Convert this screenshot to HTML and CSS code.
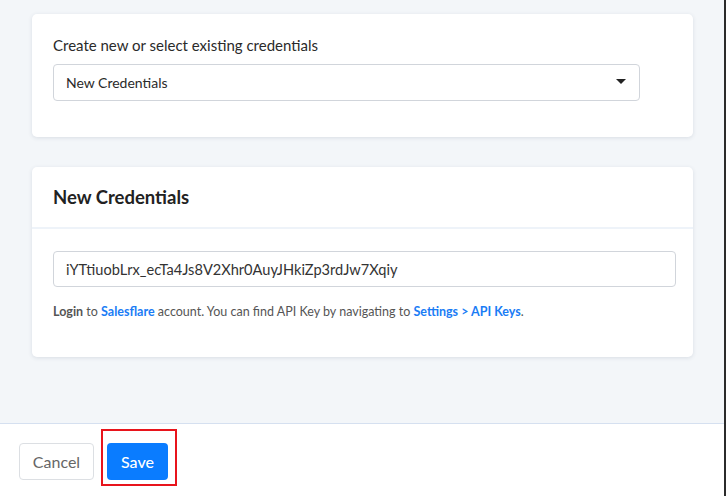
FILE: index.html
```html
<!DOCTYPE html>
<html>
<head>
<meta charset="utf-8">
<link rel="stylesheet" href="styles.css">
</head>
<body>
<div class="frame">
  <main class="content">
    <section class="card card-select">
      <label class="field-label">Create new or select existing credentials</label>
      <div class="select">
        <span class="select-value">New Credentials</span>
        <span class="caret"></span>
      </div>
    </section>
    <section class="card card-creds">
      <header class="card-header">New Credentials</header>
      <div class="card-body">
        <div class="input">iYTtiuobLrx_ecTa4Js8V2Xhr0AuyJHkiZp3rdJw7Xqiy</div>
        <p class="help"><b>Login</b> to <a class="link">Salesflare</a> account. You can find API Key by navigating to <a class="link">Settings &gt; API Keys</a>.</p>
      </div>
    </section>
  </main>
  <footer class="footer">
    <button class="btn btn-cancel">Cancel</button>
    <span class="highlight"><button class="btn btn-save">Save</button></span>
  </footer>
</div>
</body>
</html>
```
FILE: styles.css
```css
html, body {
  margin: 0;
  padding: 0;
  height: 100%;
}
body {
  font-family: Lato, "Open Sans", sans-serif;
  color: #2a2a2a;
  background: #2b2b2b;
}
.frame {
  width: 724px;
  height: 496px;
  display: flex;
  flex-direction: column;
  background: #f3f6f9;
}
.content {
  flex: 1;
  padding: 14px 31px 0 32px;
  display: flex;
  flex-direction: column;
  gap: 30px;
}
.card {
  background: #fff;
  border-radius: 5px;
  box-shadow: 0 1px 4px rgba(30, 50, 80, 0.12);
}
.card-select {
  height: 123px;
  box-sizing: border-box;
  padding: 22px 21px 0;
  display: flex;
  flex-direction: column;
}
.field-label {
  font-size: 15px;
  line-height: 18px;
  color: #2a2a2a;
  margin-bottom: 10px;
}
.select {
  width: 587px;
  height: 37px;
  box-sizing: border-box;
  border: 1px solid #d1d5db;
  border-radius: 4px;
  display: flex;
  align-items: center;
  justify-content: space-between;
  padding: 0 13px 0 12px;
}
.select-value {
  font-size: 14px;
  color: #2a2a2a;
}
.caret {
  width: 0;
  height: 0;
  border-left: 5px solid transparent;
  border-right: 5px solid transparent;
  border-top: 5px solid #222;
  margin-top: -2px;
}
.card-creds {
  height: 190px;
  display: flex;
  flex-direction: column;
}
.card-header {
  height: 62px;
  box-sizing: border-box;
  padding: 0 21px;
  display: flex;
  align-items: center;
  font-size: 18.5px;
  font-weight: 700;
  color: #222;
  border-bottom: 2px solid #eef3f9;
}
.card-body {
  padding: 22px 17px 0 21px;
}
.input {
  height: 36px;
  box-sizing: border-box;
  border: 1px solid #d1d5db;
  border-radius: 4px;
  padding: 0 12px;
  display: flex;
  align-items: center;
  font-size: 14.6px;
  color: #333;
}
.help {
  margin: 17px 0 0;
  font-size: 12.5px;
  color: #555;
}
.help b {
  font-weight: 700;
  color: #555;
}
.link {
  color: #1a7cf5;
  font-weight: 700;
}
.footer {
  height: 73px;
  box-sizing: border-box;
  background: #fff;
  border-top: 1px solid #d5e0f0;
  display: flex;
  align-items: flex-start;
  padding: 19px 0 0 19px;
  gap: 7px;
}
.btn {
  height: 37px;
  box-sizing: border-box;
  border-radius: 4px;
  font-family: Lato, "Open Sans", sans-serif;
  font-size: 16px;
  cursor: pointer;
}
.btn-cancel {
  width: 75px;
  background: #fff;
  border: 1px solid #dcdfe3;
  color: #666;
}
.highlight {
  display: flex;
  margin-top: -14px;
  padding: 12px 7px 4px 4px;
  border: 2px solid #e8141c;
}
.btn-save {
  width: 61px;
  background: #0a7cff;
  border: none;
  color: #fff;
  font-weight: 500;
}
```
